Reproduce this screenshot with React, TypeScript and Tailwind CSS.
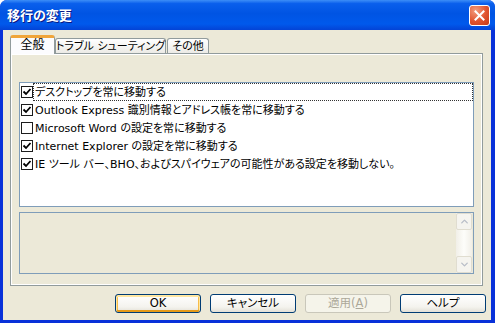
import { ChevronDown, ChevronUp } from "lucide-react";

const items = [
  { label: "デスクトップを常に移動する", checked: true, focused: true },
  { label: "Outlook Express 識別情報とアドレス帳を常に移動する", checked: true },
  { label: "Microsoft Word の設定を常に移動する", checked: false },
  { label: "Internet Explorer の設定を常に移動する", checked: true },
  { label: "IE ツール バー、BHO、およびスパイウェアの可能性がある設定を移動しない。", checked: true },
];

const CheckBox = ({ checked }: { checked: boolean }) => (
  <div className="w-[12px] h-[12px] border border-[#1c1c1c] bg-white flex items-center justify-center shrink-0">
    {checked && (
      <svg width="10" height="10" viewBox="0 0 10 10">
        <path d="M1.5 4.5 L4 7 L8.5 2" fill="none" stroke="#000" strokeWidth="1.8" />
      </svg>
    )}
  </div>
);

const XpButton = ({
  children,
  isDefault,
  disabled,
}: {
  children: React.ReactNode;
  isDefault?: boolean;
  disabled?: boolean;
}) => {
  if (disabled) {
    return (
      <div className="w-[86px] h-[19px] rounded-[3px] border border-[#c9c7ba] bg-[#f5f4ea] text-[#aca899] flex items-center justify-center text-[11.5px] leading-none">
        {children}
      </div>
    );
  }
  return (
    <div
      className={
        isDefault
          ? "w-[86px] h-[19px] rounded-[3px] border border-[#003c74] bg-[linear-gradient(#ffffff,#f4f3ee_70%,#e3e0d6)] shadow-[inset_0_1px_0_1px_#ffe7a2,inset_0_-1px_0_1px_#e59a1a,inset_1px_0_0_1px_#f7bd4a,inset_-1px_0_0_1px_#f7bd4a] flex items-center justify-center text-[11.5px] leading-none text-black"
          : "w-[86px] h-[19px] rounded-[3px] border border-[#003c74] bg-[linear-gradient(#ffffff,#f4f3ee_70%,#e3e0d6)] flex items-center justify-center text-[11.5px] leading-none text-black"
      }
    >
      {children}
    </div>
  );
};

export default function App() {
  return (
    <div
      className="w-[495px] h-[323px] flex flex-col bg-[#0831d9] rounded-t-[7px] overflow-hidden [font-feature-settings:'palt'] text-black"
      style={{ fontFamily: '"DejaVu Sans", "Noto Sans CJK JP", sans-serif' }}
    >
      {/* Title bar */}
      <div className="h-[30px] shrink-0 flex items-center pl-[7px] pr-[5px] bg-[linear-gradient(#3d8ef7_0%,#0a5fec_12%,#0054e3_45%,#0059ec_80%,#0343d6_100%)]">
        <span className="text-white font-bold text-[13px] leading-none [text-shadow:1px_1px_0_#0a1883]">
          移行の変更
        </span>
        <div className="ml-auto w-[21px] h-[21px] rounded-[3px] border border-white bg-[radial-gradient(circle_at_30%_25%,#f39d7f,#e0532e_55%,#c53a16)] flex items-center justify-center">
          <svg width="11" height="11" viewBox="0 0 11 11">
            <path d="M1.5 1.5 L9.5 9.5 M9.5 1.5 L1.5 9.5" stroke="#fff" strokeWidth="2" strokeLinecap="square" />
          </svg>
        </div>
      </div>

      {/* Client area */}
      <div className="flex-1 ml-[3px] mr-[4px] mb-[3px] bg-[#ece9d8] flex flex-col pt-[5px] pb-[7px]">
        {/* Tabs */}
        <div className="h-[18px] flex items-end pl-[7px] text-[11px] leading-none whitespace-nowrap">
          <div className="relative z-10 w-[45px] h-[19px] -mb-px rounded-t-[3px] border-x border-[#919b9c] border-t-[3px] border-t-[#f0a53a] bg-[#fcfcfe] flex items-center justify-center pb-[2px] text-[12px]">
            全般
          </div>
          <div className="w-[111px] h-[15px] rounded-t-[3px] border border-b-0 border-[#919b9c] bg-[linear-gradient(#ffffff,#ecebe6)] flex items-center justify-center">
            トラブル シューティング
          </div>
          <div className="ml-px w-[42px] h-[15px] rounded-t-[3px] border border-b-0 border-[#919b9c] bg-[linear-gradient(#ffffff,#ecebe6)] flex items-center justify-center">
            その他
          </div>
        </div>

        {/* Panel */}
        <div className="ml-[7px] w-[473px] h-[233px] border border-[#919b9c] shadow-[inset_1px_1px_0_#ffffff,inset_-1px_-1px_0_#ffffff] bg-[#ece9d8] flex flex-col px-[8px] pt-[28px]">
          {/* List */}
          <div className="h-[125px] border border-[#7f9db9] bg-white flex flex-col text-[11px] leading-none">
            {items.map((item) => (
              <div key={item.label} className="h-[18px] flex items-center pl-px shrink-0">
                <CheckBox checked={item.checked} />
                <div
                  className={
                    item.focused
                      ? "flex-1 h-full flex items-center pl-px border border-dotted border-[#333]"
                      : "flex-1 h-full flex items-center pl-[2px]"
                  }
                >
                  <span className="whitespace-nowrap">{item.label}</span>
                </div>
              </div>
            ))}
          </div>

          {/* Description */}
          <div className="mt-[5px] h-[62px] border border-[#7f9db9] bg-[#ece9d8] flex justify-end">
            <div className="w-[16px] mr-px flex flex-col bg-[linear-gradient(90deg,#f1efe8,#fdfdfa_50%,#f1efe8)]">
              <div className="h-[17px] rounded-[2px] border border-[#e0ddd0] bg-[#f5f4ef] flex items-center justify-center">
                <ChevronUp size={11} strokeWidth={3} className="text-[#b9bec8]" />
              </div>
              <div className="flex-1" />
              <div className="h-[17px] rounded-[2px] border border-[#e0ddd0] bg-[#f5f4ef] flex items-center justify-center">
                <ChevronDown size={11} strokeWidth={3} className="text-[#b9bec8]" />
              </div>
            </div>
          </div>
        </div>

        {/* Buttons */}
        <div className="mt-auto flex justify-end gap-[9px] pr-[5px]">
          <XpButton isDefault>OK</XpButton>
          <XpButton>キャンセル</XpButton>
          <XpButton disabled>
            適用(<span className="underline">A</span>)
          </XpButton>
          <XpButton>ヘルプ</XpButton>
        </div>
      </div>
    </div>
  );
}
